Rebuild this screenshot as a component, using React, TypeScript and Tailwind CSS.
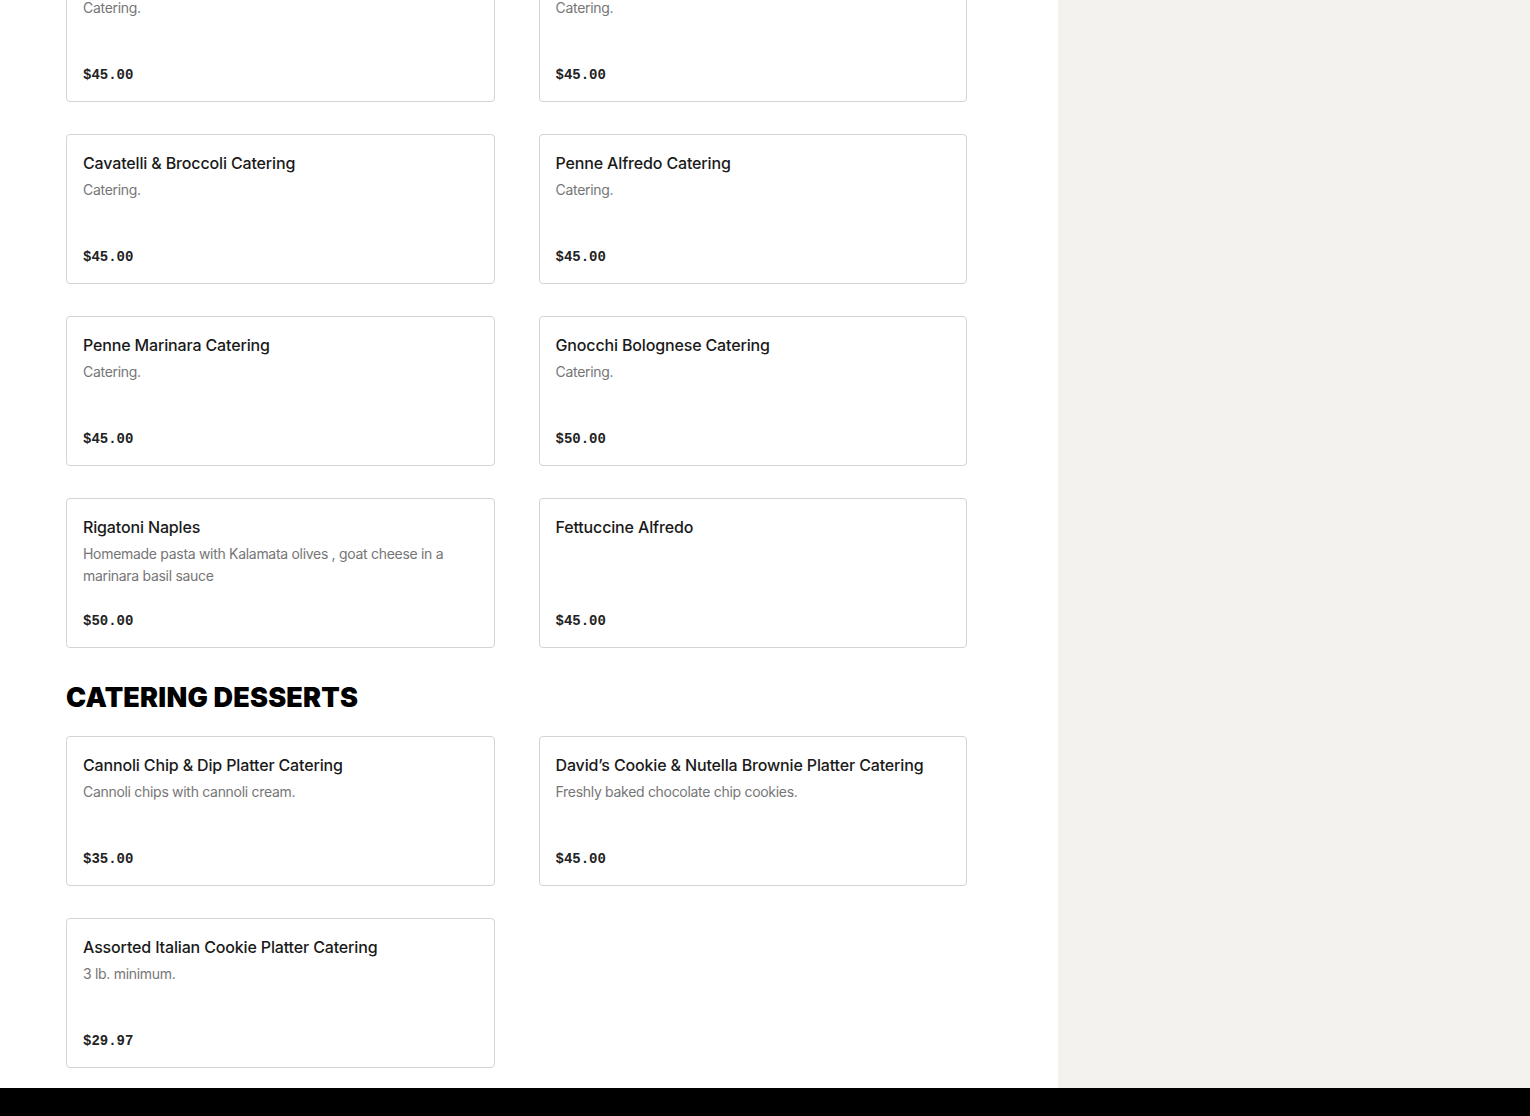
import React from 'react';

interface MenuItem {
  name: string;
  description?: string;
  price: string;
}

const pastaItems: MenuItem[] = [
  { name: 'Rigatoni Vodka Catering', description: 'Catering.', price: '$45.00' },
  { name: 'Ziti Catering', description: 'Catering.', price: '$45.00' },
  { name: 'Cavatelli & Broccoli Catering', description: 'Catering.', price: '$45.00' },
  { name: 'Penne Alfredo Catering', description: 'Catering.', price: '$45.00' },
  { name: 'Penne Marinara Catering', description: 'Catering.', price: '$45.00' },
  { name: 'Gnocchi Bolognese Catering', description: 'Catering.', price: '$50.00' },
  {
    name: 'Rigatoni Naples',
    description: 'Homemade pasta with Kalamata olives , goat cheese in a marinara basil sauce',
    price: '$50.00',
  },
  { name: 'Fettuccine Alfredo', price: '$45.00' },
];

const dessertItems: MenuItem[] = [
  { name: 'Cannoli Chip & Dip Platter Catering', description: 'Cannoli chips with cannoli cream.', price: '$35.00' },
  { name: 'David’s Cookie & Nutella Brownie Platter Catering', description: 'Freshly baked chocolate chip cookies.', price: '$45.00' },
  { name: 'Assorted Italian Cookie Platter Catering', description: '3 lb. minimum.', price: '$29.97' },
];

const ItemCard: React.FC<{ item: MenuItem }> = ({ item }) => (
  <div className="h-[150px] bg-white border border-[#d4d4d4] rounded-[4px] p-4 flex flex-col justify-between cursor-pointer">
    <div>
      <h3 className="text-[16px] leading-6 font-medium tracking-[-0.15px] text-[#1a1a1a]">{item.name}</h3>
      {item.description && (
        <p className="mt-1 text-[14px] leading-[22px] tracking-[-0.3px] text-[#767676]">{item.description}</p>
      )}
    </div>
    <span className="font-['Liberation_Mono',monospace] font-bold text-[14px] leading-5 text-[#222]">
      {item.price}
    </span>
  </div>
);

export default function App() {
  return (
    <div className="h-[1116px] overflow-hidden flex flex-col bg-white font-['Inter','Liberation_Sans',sans-serif]">
      <div className="flex flex-1 min-h-0">
        <main className="w-[1058px] pl-[66px] pr-[91px]">
          <div className="-mt-[48px] grid grid-cols-2 gap-x-[44px] gap-y-[32px]">
            {pastaItems.map((item) => (
              <ItemCard key={item.name} item={item} />
            ))}
          </div>

          <h2 className="mt-[34px] mb-[22px] text-[27px] leading-8 font-black tracking-[0.2px] text-black uppercase">
            Catering Desserts
          </h2>

          <div className="grid grid-cols-2 gap-x-[44px] gap-y-[32px]">
            {dessertItems.map((item) => (
              <ItemCard key={item.name} item={item} />
            ))}
          </div>
        </main>
        <aside className="flex-1 bg-[#f3f2ef]" />
      </div>
      <footer className="h-[28px] bg-black shrink-0" />
    </div>
  );
}
